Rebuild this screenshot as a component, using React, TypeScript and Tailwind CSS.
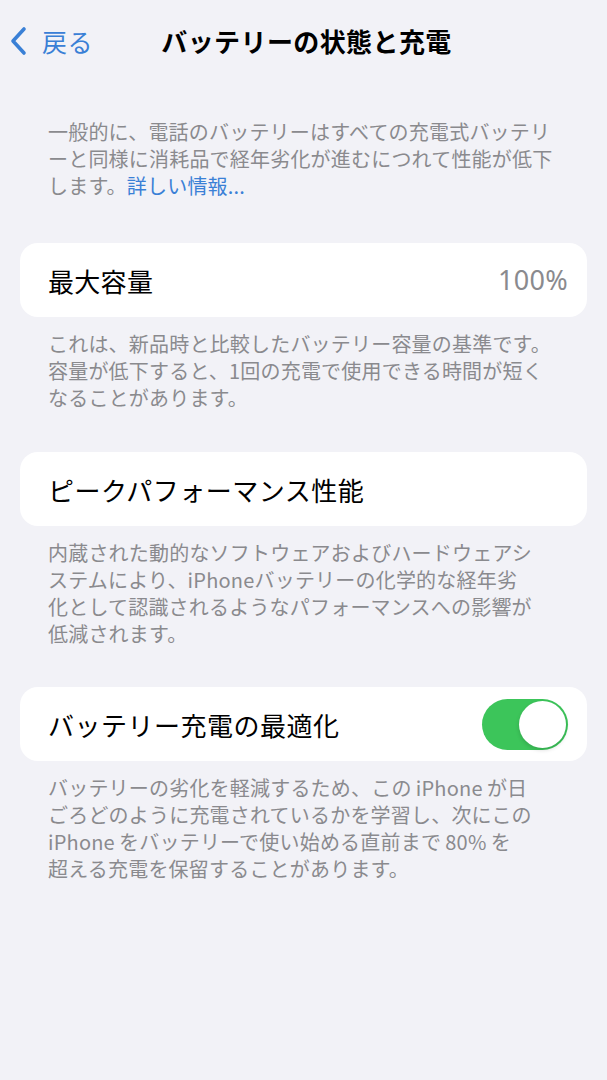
import React, { useState } from 'react';

const jp = { fontFamily: '"Noto Sans CJK JP", "Noto Sans", sans-serif' };

const Footnote: React.FC<{ lines: React.ReactNode[] }> = ({ lines }) => (
  <div className="px-[48px] pt-[13px] text-[20px] leading-[27px] text-[#8a8a8e] whitespace-nowrap tracking-[0.2px]">
    {lines.map((l, i) => (
      <div key={i}>{l}</div>
    ))}
  </div>
);

const Card: React.FC<{ children: React.ReactNode }> = ({ children }) => (
  <div className="mx-[20px] h-[74px] rounded-[18px] bg-white flex items-center justify-between pl-[28px] pr-[19px]">
    {children}
  </div>
);

export default function App() {
  const [optimized, setOptimized] = useState(true);

  return (
    <div className="w-[607px] h-[1080px] bg-[#f2f2f7] text-black overflow-hidden" style={jp}>
      {/* nav bar */}
      <div className="relative h-[80px] flex items-center">
        <button className="absolute left-[8px] top-[26px] flex items-center gap-[12px] text-[#3a80d6]">
          <svg width="22" height="30" viewBox="0 0 22 30" fill="none">
            <path d="M16 3 L5 15 L16 27" stroke="currentColor" strokeWidth="3.6" strokeLinecap="round" strokeLinejoin="round" />
          </svg>
          <span className="text-[25px] leading-[28px] tracking-[0.5px]">戻る</span>
        </button>
        <div className="w-full text-center pl-[6px] text-[26px] font-bold tracking-[0.4px]">バッテリーの状態と充電</div>
      </div>

      {/* intro */}
      <div className="pt-[38px] pb-[44px]">
        <div className="px-[48px] text-[20px] leading-[27px] text-[#8a8a8e] whitespace-nowrap tracking-[0.2px]">
          <div>一般的に、電話のバッテリーはすべての充電式バッテリ</div>
          <div>ーと同様に消耗品で経年劣化が進むにつれて性能が低下</div>
          <div>
            します。<span className="text-[#3a80d6]">詳しい情報...</span>
          </div>
        </div>
      </div>

      <Card>
        <span className="text-[26px] tracking-[0.3px]">最大容量</span>
        <span className="text-[27px] text-[#8a8a8e] tracking-[0.3px]" style={{ fontFamily: '"Noto Sans", sans-serif' }}>
          100%
        </span>
      </Card>
      <Footnote
        lines={[
          'これは、新品時と比較したバッテリー容量の基準です。',
          '容量が低下すると、1回の充電で使用できる時間が短く',
          'なることがあります。',
        ]}
      />

      <div className="h-[41px]" />
      <Card>
        <span className="text-[26px] tracking-[0.5px]">ピークパフォーマンス性能</span>
      </Card>
      <Footnote
        lines={[
          '内蔵された動的なソフトウェアおよびハードウェアシ',
          'ステムにより、iPhoneバッテリーの化学的な経年劣',
          '化として認識されるようなパフォーマンスへの影響が',
          '低減されます。',
        ]}
      />

      <div className="h-[40px]" />
      <Card>
        <span className="text-[26px] tracking-[0.5px]">バッテリー充電の最適化</span>
        <button
          onClick={() => setOptimized(!optimized)}
          className={`relative w-[86px] h-[51px] rounded-full flex items-center px-[2px] ${
            optimized ? 'bg-[#3cc55a] justify-end' : 'bg-[#e5e5ea] justify-start'
          }`}
        >
          <span className="block w-[47px] h-[47px] rounded-full bg-white shadow-[0_2px_4px_rgba(0,0,0,0.15)]" />
        </button>
      </Card>
      <Footnote
        lines={[
          'バッテリーの劣化を軽減するため、この\u2009iPhone\u2009が日',
          'ごろどのように充電されているかを学習し、次にこの',
          'iPhone\u2009をバッテリーで使い始める直前まで\u200980%\u2009を',
          '超える充電を保留することがあります。',
        ]}
      />
    </div>
  );
}
